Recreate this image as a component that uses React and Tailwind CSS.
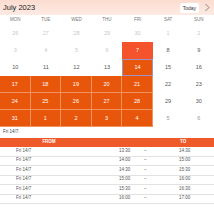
const days = ['MON', 'TUE', 'WED', 'THU', 'FRI', 'SAT', 'SUN'];

const weeks = [
  [26, 27, 28, 29, 30, 1, 2],
  [3, 4, 5, 6, 7, 8, 9],
  [10, 11, 12, 13, 14, 15, 16],
  [17, 18, 19, 20, 21, 22, 23],
  [24, 25, 26, 27, 28, 29, 30],
  [31, 1, 2, 3, 4, 5, 6],
];

const slots = [
  ['13:30', '14:30'],
  ['14:00', '15:00'],
  ['14:30', '15:30'],
  ['15:00', '16:00'],
  ['15:30', '16:30'],
  ['16:00', '17:00'],
];

function cellClass(w, d) {
  if (w === 1 && d === 4) return 'bg-[#f4532b] text-white';
  if (w === 2 && d === 4) return 'bg-[#e8560c] text-white border border-[#9d93c4]';
  if (w >= 3 && d <= 4) return 'bg-[#e8560c] text-white border-r border-b border-[#f2935f]';
  if (w === 0 || (w === 1 && d < 4)) return 'text-[#c8c8c8]';
  if (w === 5) return 'text-[#999]';
  return 'text-[#555]';
}

export default function App() {
  return (
    <div className="w-[214px] h-[212px] bg-white overflow-hidden" style={{ fontFamily: 'Liberation Sans, Arial, sans-serif' }}>
      <div className="h-[15px] flex items-center justify-between pl-[3px] pr-[4px] bg-gradient-to-b from-[#fcdccf] to-[#fdebe4]">
        <span className="text-[7.5px] text-[#222]">July 2023</span>
        <div className="flex items-center gap-[5px]">
          <span className="bg-white rounded-[2px] px-[3px] h-[10px] leading-[10px] text-[5px] text-[#333]">Today</span>
          <svg width="6" height="9" viewBox="0 0 6 9" fill="none">
            <path d="M1.5 1l3.5 3.5-3.5 3.5" stroke="#777" strokeWidth="0.9" />
          </svg>
        </div>
      </div>
      <div className="grid grid-cols-7 h-[10px] items-center">
        {days.map((d) => (
          <span key={d} className="text-center text-[4.5px] text-[#777]">{d}</span>
        ))}
      </div>
      <div className="flex flex-col">
        {weeks.map((wk, w) => (
          <div key={w} className="grid grid-cols-7 h-[17px]">
            {wk.map((n, d) => (
              <div key={d} className={`flex items-center justify-center text-[5.5px] ${cellClass(w, d)}`}>
                {n}
              </div>
            ))}
          </div>
        ))}
      </div>
      <div className="h-[11px] flex items-center pl-[3px] text-[4.5px] text-[#444]">Fri 14/7:</div>
      <div className="h-[9px] bg-[#ef5a2b] flex items-center text-[4.5px] font-bold text-white">
        <span className="w-[98px] text-center">FROM</span>
        <span className="ml-[82px]">TO</span>
      </div>
      {slots.map(([a, b], i) => (
        <div key={i} className="h-[9.5px] flex items-center text-[4.5px] text-[#555] border-b border-[#e2e2e2]">
          <span className="pl-[16px] w-[119px]">Fri 14/7</span>
          <span className="w-[25px]">{a}</span>
          <span className="w-[35px]">–</span>
          <span>{b}</span>
        </div>
      ))}
    </div>
  );
}
